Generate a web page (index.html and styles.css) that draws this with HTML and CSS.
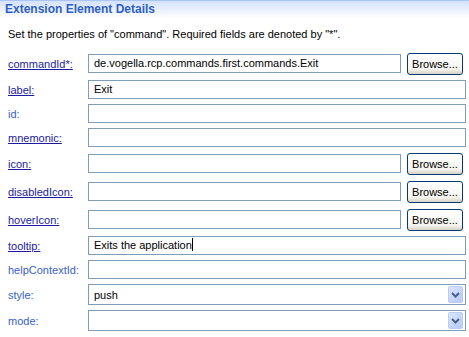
FILE: index.html
```html
<!DOCTYPE html>
<html lang="en">
<head>
    <meta charset="UTF-8">
    <title>Extension Element Details</title>
    <link rel="stylesheet" href="styles.css">
</head>
<body>

<div class="section-header">
    <div class="section-title">Extension Element Details</div>
</div>
<div class="description">Set the properties of "command". Required fields are denoted by "*".</div>

<div class="form">
    <a class="label link">commandId*:</a>
    <div class="field-row">
        <div class="field">de.vogella.rcp.commands.first.commands.Exit</div>
        <button class="browse">Browse...</button>
    </div>

    <a class="label link">label:</a>
    <div class="field">Exit</div>

    <span class="label">id:</span>
    <div class="field"></div>

    <a class="label link">mnemonic:</a>
    <div class="field"></div>

    <a class="label link">icon:</a>
    <div class="field-row">
        <div class="field"></div>
        <button class="browse">Browse...</button>
    </div>

    <a class="label link">disabledIcon:</a>
    <div class="field-row">
        <div class="field"></div>
        <button class="browse">Browse...</button>
    </div>

    <a class="label link">hoverIcon:</a>
    <div class="field-row">
        <div class="field"></div>
        <button class="browse">Browse...</button>
    </div>

    <a class="label link">tooltip:</a>
    <div class="field">Exits the application<span class="caret"></span></div>

    <span class="label">helpContextId:</span>
    <div class="field"></div>

    <span class="label">style:</span>
    <div class="combo">
        <span>push</span>
        <div class="combo-arrow">
            <svg width="9" height="6" viewBox="0 0 9 6"><path d="M1 1 L4.5 4.5 L8 1" fill="none" stroke="#4d5f86" stroke-width="2"/></svg>
        </div>
    </div>

    <span class="label">mode:</span>
    <div class="combo">
        <span></span>
        <div class="combo-arrow">
            <svg width="9" height="6" viewBox="0 0 9 6"><path d="M1 1 L4.5 4.5 L8 1" fill="none" stroke="#4d5f86" stroke-width="2"/></svg>
        </div>
    </div>
</div>

</body>
</html>
```

FILE: styles.css
```css
body {
    font-family: "Liberation Sans", Arial, sans-serif;
    font-size: 11px;
    margin: 0;
    background: #ffffff;
    color: #000000;
}

.section-header {
    height: 20px;
    border-top: 1px solid #a9c5f5;
    background: linear-gradient(#d3e1fb, #ffffff 17px);
    padding-left: 5px;
    box-sizing: border-box;
}

.section-title {
    font-size: 12px;
    font-weight: bold;
    color: #2f5fc3;
    line-height: 17px;
}

.description {
    padding: 8px 0 0 8px;
    height: 24px;
    line-height: 13px;
}

.form {
    display: grid;
    grid-template-columns: 80px 1fr;
    row-gap: 5px;
    align-items: center;
    padding: 0 3px 0 8px;
}

.label {
    color: #3662c5;
}

.link {
    color: #1b1b9e;
    text-decoration: underline;
}

.field-row {
    display: flex;
    align-items: center;
    height: 23px;
}

.field {
    flex: 1;
    height: 19px;
    border: 1px solid #7f9db9;
    box-sizing: border-box;
    padding-left: 5px;
    line-height: 17px;
    white-space: nowrap;
}

.caret {
    display: inline-block;
    width: 1px;
    height: 13px;
    background: #000000;
    vertical-align: -2px;
}

.browse {
    width: 56px;
    height: 22px;
    margin: 0 3px 0 6px;
    padding: 0;
    border: 1px solid #003c74;
    border-radius: 3px;
    background: linear-gradient(#ffffff, #f5f4ef 75%, #d8d3c6);
    font-family: "Liberation Sans", Arial, sans-serif;
    font-size: 11px;
    color: #000000;
}

.combo {
    display: flex;
    align-items: center;
    justify-content: space-between;
    height: 21px;
    border: 1px solid #7f9db9;
    box-sizing: border-box;
    padding: 1px 2px 1px 5px;
}

.combo-arrow {
    width: 15px;
    height: 17px;
    box-sizing: border-box;
    border: 1px solid #b9cdf6;
    border-radius: 2px;
    background: linear-gradient(135deg, #dbe6fe, #b5c9f7);
    display: flex;
    align-items: center;
    justify-content: center;
}
```
